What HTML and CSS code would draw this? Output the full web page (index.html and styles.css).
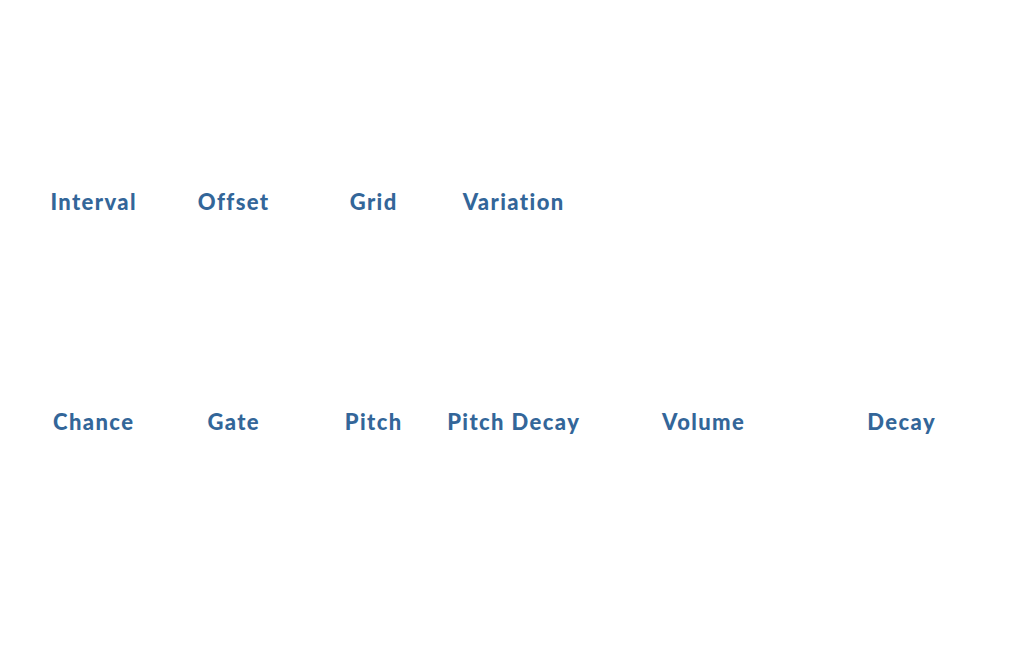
FILE: index.html
```html
<!DOCTYPE html>
<html>
<head>
<meta charset="utf-8">
<link rel="stylesheet" href="styles.css">
</head>
<body>
<div class="panel">
  <div class="row">
    <div class="ctl"><div class="knob"></div><span class="label">Interval</span></div>
    <div class="ctl"><div class="knob"></div><span class="label">Offset</span></div>
    <div class="ctl"><div class="knob"></div><span class="label">Grid</span></div>
    <div class="ctl"><div class="knob"></div><span class="label">Variation</span></div>
  </div>
  <div class="row">
    <div class="ctl"><div class="knob"></div><span class="label">Chance</span></div>
    <div class="ctl"><div class="knob"></div><span class="label">Gate</span></div>
    <div class="ctl"><div class="knob"></div><span class="label">Pitch</span></div>
    <div class="ctl"><div class="knob"></div><span class="label">Pitch Decay</span></div>
    <div class="ctl wide"><div class="knob"></div><span class="label">Volume</span></div>
    <div class="ctl mid"><div class="knob"></div><span class="label">Decay</span></div>
  </div>
</div>
</body>
</html>
```

FILE: styles.css
```css
html, body {
  margin: 0;
  padding: 0;
  background: #ffffff;
}
.panel {
  width: 1020px;
  height: 650px;
  padding-left: 23px;
  box-sizing: border-box;
}
.row {
  display: flex;
  height: 220px;
}
.ctl {
  width: 140px;
  display: flex;
  flex-direction: column;
  align-items: center;
}
.ctl.wide { width: 240px; }
.ctl.mid { width: 156px; }
.knob {
  height: 189px;
  flex: none;
}
.label {
  font-family: "Lato", "Liberation Sans", sans-serif;
  font-weight: 900;
  font-size: 22px;
  line-height: 26px;
  letter-spacing: 1.4px;
  padding-left: 1.4px;
  color: #336699;
  white-space: nowrap;
}
```
